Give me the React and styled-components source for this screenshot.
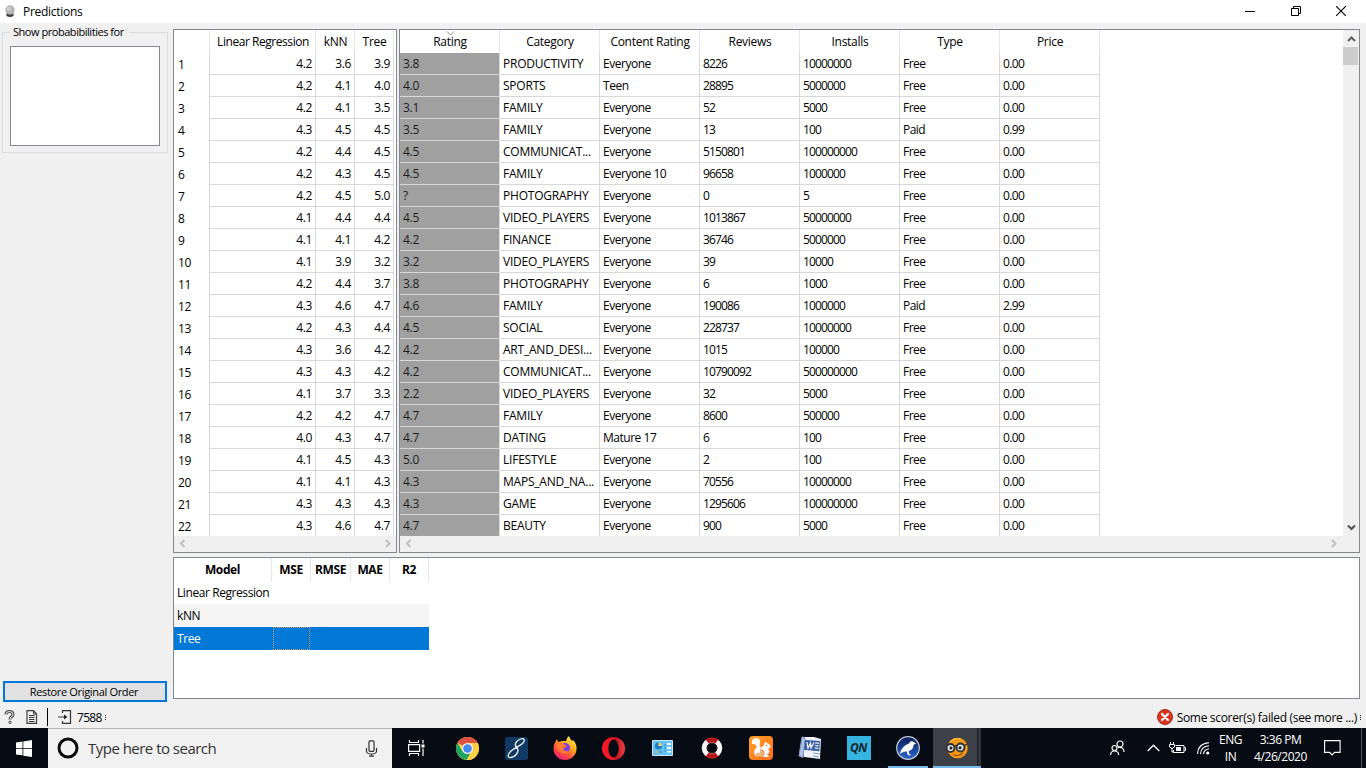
import React from "react";
import styled, { createGlobalStyle, css } from "styled-components";

const Global = createGlobalStyle`
  *, *::before, *::after { box-sizing: border-box; }
  body { margin: 0; background: #f0f0f0; overflow: hidden; }
`;

const FRAME = "#828790";
const GRID = "#d8d8d8";

const Screen = styled.div`
  width: 1366px;
  height: 768px;
  display: flex;
  flex-direction: column;
  background: #f0f0f0;
  color: #000;
  font: 12px/16px "Open Sans", "Noto Sans", sans-serif;
  letter-spacing: -0.32px;
  white-space: nowrap;
`;

const TitleBar = styled.header`
  height: 23px;
  flex: none;
  display: flex;
  align-items: center;
  background: #fff;
  padding: 0 2px 0 5px;
`;
const Title = styled.span`
  flex: 1;
  padding-left: 8px;
  letter-spacing: -0.28px;
`;
const WindowButton = styled.span`
  width: 45.5px;
  height: 21px;
  align-self: flex-start;
  display: flex;
  align-items: center;
  justify-content: center;
`;

const Body = styled.main`
  height: 681px;
  flex: none;
  display: flex;
  padding: 6px 6px 0 2px;
`;
const Side = styled.aside`
  width: 171px;
  flex: none;
  display: flex;
  flex-direction: column;
  justify-content: space-between;
`;
const Group = styled.fieldset`
  width: 166px;
  height: 128px;
  margin: -4px 0 0;
  padding: 7px 7px 0;
  border: 1px solid #dcdcdc;
  min-width: 0;
`;
const GroupLabel = styled.legend`
  padding: 0 5px 0 3px;
  height: 14px;
  font-size: 11px;
  line-height: 13px;
  letter-spacing: -0.46px;
`;
const ListBox = styled.div`
  width: 150px;
  height: 100px;
  border: 1px solid ${FRAME};
  background: #fff;
`;
const RestoreButton = styled.button`
  width: 164px;
  height: 21px;
  margin: 0 0 2px 1px;
  padding: 0 2px 0 0;
  border: 2px solid #0078d7;
  background: #e1e1e1;
  color: #000;
  font: inherit;
  font-size: 11px;
  letter-spacing: -0.33px;
  line-height: 18px;
`;

const Main = styled.section`
  display: flex;
  flex-direction: column;
  gap: 4px;
  width: 1187px;
`;
const Tables = styled.div`
  display: flex;
  gap: 2px;
  height: 524px;
  flex: none;
`;
const Frame = styled.div`
  width: ${(p) => p.$w}px;
  height: ${(p) => p.$h}px;
  flex: none;
  border: 1px solid ${FRAME};
  background: #fff;
  display: flex;
  overflow: hidden;
`;
const Pane = styled.div`
  flex: 1;
  min-width: 0;
  display: flex;
  flex-direction: column;
`;
const Viewport = styled.div`
  height: 506px;
  flex: none;
  overflow: hidden;
`;
const Grid = styled.div`
  display: grid;
  width: max-content;
  grid-template-columns: ${(p) => p.$cols};
  grid-template-rows: 23px;
  grid-auto-rows: 22px;
`;
const Head = styled.div`
  border-right: 1px solid #e5e5e5;
  text-align: center;
  line-height: 24px;
  padding-left: 1px;
  letter-spacing: ${(p) => p.$ls || -0.28}px;
  position: relative;
`;
const SortMark = styled.svg`
  position: absolute;
  top: 1px;
  left: 46px;
`;
const RowNumber = styled.div`
  border-right: 1px solid ${GRID};
  padding-left: 4px;
  line-height: 24px;
`;
const Cell = styled.div`
  border-right: 1px solid ${GRID};
  border-bottom: 1px solid ${GRID};
  line-height: 22px;
  padding: 0 3px;
  overflow: hidden;
  text-align: ${(p) => (p.$right ? "right" : "left")};
  letter-spacing: ${(p) => p.$ls ?? -0.35}px;
  ${(p) => p.$shaded && css`
    background: #a0a0a0;
    color: #1c1c1c;
  `}
`;
const HScroll = styled.div`
  flex: 1;
  background: #f0f0f0;
  display: flex;
  justify-content: space-between;
  align-items: center;
  padding: 0 ${(p) => p.$end}px 1px 5px;
`;
const VScroll = styled.div`
  width: 16px;
  height: 506px;
  flex: none;
  background: #f0f0f0;
  display: flex;
  flex-direction: column;
  align-items: center;
  padding: 5px 0 4px;
`;
const Thumb = styled.div`
  width: 15px;
  height: 18px;
  margin: 3px 1px auto 0;
  background: #cdcdcd;
`;
const RightPane = styled.div`
  display: flex;
  flex-direction: column;
  flex: 1;
`;
const RightTop = styled.div`
  display: flex;
  height: 506px;
`;

const ScoreTable = styled.div`
  width: 255px;
`;
const ScoreRow = styled.div`
  display: grid;
  grid-template-columns: 98px 39px 40px 39px 39px;
  height: 23px;
  line-height: 23px;
  background: ${(p) => p.$bg || "#fff"};
  color: ${(p) => p.$fg || "#000"};
`;
const ScoreHead = styled.div`
  border-right: 1px solid #e5e5e5;
  text-align: center;
  font-weight: 700;
  line-height: 24px;
  letter-spacing: ${(p) => p.$ls || -0.4}px;
`;
const ScoreCell = styled.div`
  padding-left: 3px;
  letter-spacing: -0.42px;
`;
const FocusCell = styled.div`
  margin: 0 0 0 1px;
  width: 37px;
  border: 1px dotted #d99a63;
`;

const StatusBar = styled.footer`
  height: 24px;
  flex: none;
  display: flex;
  align-items: center;
  padding: 2px 5px 0 4px;
`;
const Divider = styled.span`
  width: 1px;
  height: 18px;
  background: #000;
  margin: 0 10px 0 9px;
`;
const StatusText = styled.span`
  padding-left: ${(p) => p.$pad}px;
  padding-top: 1px;
  letter-spacing: ${(p) => p.$ls}px;
`;
const Grip = styled.span`
  width: 1px;
  height: 5px;
  margin-left: 3px;
  border-top: 1px solid #222;
  border-bottom: 1px solid #222;
  background: linear-gradient(transparent 1px, #222 1px, #222 2px, transparent 2px);
`;
const Spacer = styled.span`
  flex: 1;
`;

const Taskbar = styled.nav`
  height: 40px;
  flex: none;
  display: flex;
  background: #070c14;
  color: #fff;
`;
const StartButton = styled.div`
  width: 48px;
  display: flex;
  align-items: center;
  justify-content: center;
`;
const SearchBox = styled.div`
  width: 344px;
  border-top: 1px solid #b8b8b8;
  background: #f1f1f1;
  color: #333;
  display: flex;
  align-items: center;
  padding: 0 14px 1px 8px;
`;
const SearchText = styled.span`
  flex: 1;
  padding-left: 8px;
  font-size: 15px;
  line-height: 20px;
  letter-spacing: -0.52px;
`;
const TaskSlot = styled.div`
  width: ${(p) => p.$w || 49}px;
  padding-left: ${(p) => p.$pl || 0}px;
  display: flex;
  align-items: center;
  justify-content: center;
  flex: none;
`;
const RunningSlot = styled.div`
  width: ${(p) => p.$w}px;
  margin-left: ${(p) => p.$ml}px;
  display: flex;
  align-items: center;
  justify-content: center;
  border-bottom: 2px solid #76b9ed;
  padding-top: 2px;
  background: ${(p) => (p.$active ? "linear-gradient(90deg,#3d4046 44px,#1c2026 44px,#1c2026 45px,#30343a 45px)" : "transparent")};
`;
const QnTile = styled.div`
  width: 24px;
  height: 24px;
  background: #36b4e0;
  color: #12242e;
  font: italic 700 12px/24px "Open Sans", sans-serif;
  letter-spacing: -0.3px;
  text-align: center;
`;
const Tray = styled.div`
  margin-left: auto;
  display: flex;
  align-items: center;
`;
const TrayIcon = styled.span`
  width: ${(p) => p.$w}px;
  display: flex;
  justify-content: center;
  flex: none;

  svg { flex: none; }
`;
const TrayText = styled.div`
  width: ${(p) => p.$w}px;
  text-align: center;
  font-size: 12px;
  line-height: 17px;
  letter-spacing: ${(p) => p.$ls}px;
`;
const DesktopEdge = styled.span`
  width: 5px;
  height: 40px;
  border-left: 1px solid #4d5158;
`;

const PREDICTIONS = `4.2 3.6 3.9|4.2 4.1 4.0|4.2 4.1 3.5|4.3 4.5 4.5|4.2 4.4 4.5|4.2 4.3 4.5|4.2 4.5 5.0|4.1 4.4 4.4|4.1 4.1 4.2|4.1 3.9 3.2|4.2 4.4 3.7|4.3 4.6 4.7|4.2 4.3 4.4|4.3 3.6 4.2|4.3 4.3 4.2|4.1 3.7 3.3|4.2 4.2 4.7|4.0 4.3 4.7|4.1 4.5 4.3|4.1 4.1 4.3|4.3 4.3 4.3|4.3 4.6 4.7`
  .split("|")
  .map((r) => r.split(" "));

const APPS = [
  ["3.8", "PRODUCTIVITY", "Everyone", "8226", "10000000", "Free", "0.00"],
  ["4.0", "SPORTS", "Teen", "28895", "5000000", "Free", "0.00"],
  ["3.1", "FAMILY", "Everyone", "52", "5000", "Free", "0.00"],
  ["3.5", "FAMILY", "Everyone", "13", "100", "Paid", "0.99"],
  ["4.5", "COMMUNICAT...", "Everyone", "5150801", "100000000", "Free", "0.00"],
  ["4.5", "FAMILY", "Everyone 10", "96658", "1000000", "Free", "0.00"],
  ["?", "PHOTOGRAPHY", "Everyone", "0", "5", "Free", "0.00"],
  ["4.5", "VIDEO_PLAYERS", "Everyone", "1013867", "50000000", "Free", "0.00"],
  ["4.2", "FINANCE", "Everyone", "36746", "5000000", "Free", "0.00"],
  ["3.2", "VIDEO_PLAYERS", "Everyone", "39", "10000", "Free", "0.00"],
  ["3.8", "PHOTOGRAPHY", "Everyone", "6", "1000", "Free", "0.00"],
  ["4.6", "FAMILY", "Everyone", "190086", "1000000", "Paid", "2.99"],
  ["4.5", "SOCIAL", "Everyone", "228737", "10000000", "Free", "0.00"],
  ["4.2", "ART_AND_DESI...", "Everyone", "1015", "100000", "Free", "0.00"],
  ["4.2", "COMMUNICAT...", "Everyone", "10790092", "500000000", "Free", "0.00"],
  ["2.2", "VIDEO_PLAYERS", "Everyone", "32", "5000", "Free", "0.00"],
  ["4.7", "FAMILY", "Everyone", "8600", "500000", "Free", "0.00"],
  ["4.7", "DATING", "Mature 17", "6", "100", "Free", "0.00"],
  ["5.0", "LIFESTYLE", "Everyone", "2", "100", "Free", "0.00"],
  ["4.3", "MAPS_AND_NA...", "Everyone", "70556", "10000000", "Free", "0.00"],
  ["4.3", "GAME", "Everyone", "1295606", "100000000", "Free", "0.00"],
  ["4.7", "BEAUTY", "Everyone", "900", "5000", "Free", "0.00"],
];
const APP_COLUMNS = ["Rating", "Category", "Content Rating", "Reviews", "Installs", "Type", "Price"];
const CELL_SPACING = [-0.3, -0.22, -0.48, -0.85, -0.85, -0.55, -0.6];

const ARROWS = {
  left: "M5.5 1 2 4.5 5.5 8",
  right: "M2 1 5.5 4.5 2 8",
  up: "M1 6 4.5 2.5 8 6",
  down: "M1 2.5 4.5 6 8 2.5",
};
const Arrow = ({ dir, color = "#bfbfbf" }) => (
  <svg width={dir === "up" || dir === "down" ? 9 : 7} height="9" fill="none" stroke={color} strokeWidth="2">
    <path d={ARROWS[dir]} />
  </svg>
);

const CrystalBall = () => (
  <svg width="10" height="13" viewBox="0 0 10 13">
    <path d="M1.5 8h7v3q-3.500 2-7 0z" fill="#3c3c3c" />
    <circle cx="5" cy="5" r="4.700" fill="#b4b4b4" />
    <circle cx="3.800" cy="4" r="2.300" fill="#cfcfcf" />
  </svg>
);

function PredictionTable() {
  return (
    <Frame $w={224} $h={524}>
      <Pane>
        <Viewport>
          <Grid $cols="36px 106px 39px 39px">
            <Head />
            <Head $ls={-0.45}>Linear Regression</Head>
            <Head>kNN</Head>
            <Head>Tree</Head>
            {PREDICTIONS.map((row, i) => (
              <React.Fragment key={i}>
                <RowNumber>{i + 1}</RowNumber>
                {row.map((v, j) => (
                  <Cell key={j} $right>{v}</Cell>
                ))}
              </React.Fragment>
            ))}
          </Grid>
        </Viewport>
        <HScroll $end={5}>
          <Arrow dir="left" />
          <Arrow dir="right" />
        </HScroll>
      </Pane>
    </Frame>
  );
}

function DataTable() {
  return (
    <Frame $w={961} $h={524}>
      <RightPane>
        <RightTop>
          <Pane>
            <Viewport>
              <Grid $cols="repeat(7, 100px)">
                {APP_COLUMNS.map((c, i) => (
                  <Head key={c}>
                    {c}
                    {i === 0 && (
                      <SortMark width="9" height="5" fill="none" stroke="#8a8a8a">
                        <path d="M1 .5 4.500 4 8 .5" />
                      </SortMark>
                    )}
                  </Head>
                ))}
                {APPS.map((row, i) =>
                  row.map((v, j) => (
                    <Cell key={`${i}-${j}`} $shaded={j === 0} $ls={CELL_SPACING[j]}>{v}</Cell>
                  ))
                )}
              </Grid>
            </Viewport>
          </Pane>
          <VScroll>
            <Arrow dir="up" color="#606060" />
            <Thumb />
            <Arrow dir="down" color="#505050" />
          </VScroll>
        </RightTop>
        <HScroll $end={22}>
          <Arrow dir="left" />
          <Arrow dir="right" />
        </HScroll>
      </RightPane>
    </Frame>
  );
}

function Scores() {
  return (
    <Frame $w={1187} $h={142}>
      <ScoreTable>
        <ScoreRow>
          {["Model", "MSE", "RMSE", "MAE", "R2"].map((h) => (
            <ScoreHead key={h}>{h}</ScoreHead>
          ))}
        </ScoreRow>
        <ScoreRow><ScoreCell>Linear Regression</ScoreCell></ScoreRow>
        <ScoreRow $bg="#f5f5f5"><ScoreCell>kNN</ScoreCell></ScoreRow>
        <ScoreRow $bg="#0078d7" $fg="#fff">
          <ScoreCell>Tree</ScoreCell>
          <FocusCell />
        </ScoreRow>
      </ScoreTable>
    </Frame>
  );
}

const TaskView = () => (
  <svg width="17" height="16" fill="none" stroke="#fff" strokeWidth="1.200">
    <path d="M1.500 0v2.500h9V0M1.500 16v-2.500h9V16M.6 4.600h11v6.800H.6zM15 0v3.500M15 8.500V16" />
    <path d="M13.500 4.500h3v3h-3z" fill="#fff" stroke="none" />
  </svg>
);
const Chrome = () => (
  <svg width="23" height="23" viewBox="0 0 24 24">
    <circle cx="12" cy="12" r="12" fill="#ffce44" />
    <path d="M12 12 1.600 6A12 12 0 0 1 22.400 6L12 6.500z" fill="#dd5144" />
    <path d="M1.600 6A12 12 0 0 0 11 24l5.500-9.300L12 12 6.500 14.500z" fill="#1da362" />
    <path d="M12 6.300h10.500A12 12 0 0 1 11 24l6-10z" fill="#ffce44" />
    <circle cx="12" cy="12" r="5.800" fill="#f3f3f3" />
    <circle cx="12" cy="12" r="4.500" fill="#4587f3" />
  </svg>
);
const ScriptEight = () => (
  <svg width="23" height="23" viewBox="0 0 23 23" fill="none">
    <rect width="23" height="23" rx="2.500" fill="#123963" />
    <path d="M12 10.500C8.500 8 11 3.500 15.500 2c4-1.200 5 1.500 2 4.500-3 2.800-7.500 4-11.500 7.500-4 3.600-3.500 7 0 6.500 4-.5 9-5.500 6-10z" stroke="#f4f7fa" strokeWidth="1.300" />
  </svg>
);
const Firefox = () => (
  <svg width="24" height="24" viewBox="0 0 24 24">
    <defs>
      <linearGradient id="fox" x1=".85" y1="0" x2=".2" y2="1">
        <stop offset="0" stopColor="#fff44f" />
        <stop offset=".4" stopColor="#ffa41c" />
        <stop offset=".7" stopColor="#ff4a40" />
        <stop offset="1" stopColor="#e8187c" />
      </linearGradient>
    </defs>
    <path d="M13 5q1-4 3-5 1 3 3 5l1-1q4 4 3.500 9a11.500 11 0 0 1-23 0Q.5 8 3 5l.5-2 2 3L9 5z" fill="url(#fox)" />
    <circle cx="12" cy="12" r="5" fill="#7a3fe0" />
    <path d="M4 8q4-2 7 .5l3 1.500q-2 2-4 2 1 4 6 3-3 4-8 2-5-3-4-9z" fill="#ff7a2f" />
  </svg>
);
const Opera = () => (
  <svg width="23" height="23" viewBox="0 0 24 24">
    <defs>
      <linearGradient id="opera" x1="0" x2="1">
        <stop offset="0" stopColor="#ff1b2d" />
        <stop offset=".55" stopColor="#e01525" />
        <stop offset=".56" stopColor="#b50d1b" />
        <stop offset="1" stopColor="#ef4048" />
      </linearGradient>
    </defs>
    <circle cx="12" cy="12" r="12" fill="url(#opera)" />
    <ellipse cx="12" cy="12" rx="5.400" ry="9.300" fill="#070c14" />
  </svg>
);
const ControlPanel = () => (
  <svg width="21" height="16" viewBox="0 0 21 16">
    <rect width="21" height="16" rx="1" fill="#c9e9fb" />
    <rect x="1" y="1" width="19" height="14" fill="#65c3f3" />
    <circle cx="6.500" cy="6" r="3.600" fill="#217fc3" />
    <path d="M6.500 6V2.400A3.600 3.600 0 0 1 10 6z" fill="#f4d37a" />
    <path d="M12 5h2M12 8h2M12 11h2M3 12h7" stroke="#2485c5" strokeWidth="1.200" />
    <path d="M15 3h4v2h-4zM15 7h4v2h-4zM15 11h4v1.500h-4z" fill="#f4fbff" />
    <path d="M3 12h4" stroke="#f2c05b" strokeWidth="1.300" />
  </svg>
);
const Lifebuoy = () => (
  <svg width="22" height="22" viewBox="0 0 22 22" fill="none">
    <circle cx="11" cy="11" r="7.800" stroke="#f5f5f5" strokeWidth="5" />
    <path d="M6.200 4.600a8 8 0 0 1 9.600 0M6.200 17.400a8 8 0 0 0 9.600 0" stroke="#b71518" strokeWidth="5" />
    <circle cx="11" cy="11" r="5" stroke="#40191b" strokeWidth=".7" />
  </svg>
);
const Squirrel = () => (
  <svg width="24" height="24" viewBox="0 0 24 24">
    <defs>
      <linearGradient id="uc" x1="0" x2="1" y1="0" y2="1">
        <stop offset="0" stopColor="#ffa326" />
        <stop offset="1" stopColor="#ff6a1c" />
      </linearGradient>
    </defs>
    <rect width="24" height="24" rx="4" fill="url(#uc)" />
    <path d="M3 8q-1-5 4-6 4 0 4 4-1 3 1 6l3-3 1-3 4 2 2 3-3 2q3 3-1 6l3 2H10q-5-1-5-5 0-3 3-5-2-4-5-3z" fill="#fff" />
    <path d="M8 17a3.500 3.500 0 1 0 3-3m0 2a1.500 1.500 0 1 1-1 1" fill="none" stroke="#f97b1d" strokeWidth="1.200" />
    <circle cx="17.500" cy="9.500" r=".8" fill="#f97b1d" />
  </svg>
);
const WordIcon = () => (
  <svg width="24" height="24" viewBox="0 0 24 24">
    <path d="M4 1h12l7 2-1 20-16-2z" fill="#eef3fa" />
    <path d="M4 1 1 20l4 1.500 2-20zM15 14l7 1M15 17l7 1M15 20l6 1" fill="#acc3e5" stroke="#819bc8" />
    <path d="m7 4 15 1-.8 10L6 14z" fill="#345ca7" />
    <path d="m9 6 1 6 2.500-5 .5 5 3-5.500M17 7l4 .2M17 9.500l3.500.3M16.500 12l3.800.3" stroke="#fff" strokeWidth="1.200" fill="none" />
  </svg>
);
const Bird = () => (
  <svg width="24" height="24" viewBox="0 0 24 24">
    <defs>
      <linearGradient id="sky" x1="0" x2="0" y1="0" y2="1">
        <stop offset="0" stopColor="#0c1d58" />
        <stop offset="1" stopColor="#2866ce" />
      </linearGradient>
    </defs>
    <circle cx="12" cy="12" r="11.300" fill="url(#sky)" stroke="#c6ccd8" strokeWidth="1.200" />
    <path d="M4 17q2-7 9-9.500 1-3 4-2l3 2-2.500 1.500q0 5-5 6l1 3.500h1.500v.8h-3l-1.500-4q-3 0-6.500 2.500z" fill="#fff" />
  </svg>
);
const OrangeFace = () => (
  <svg width="24" height="22" viewBox="0 0 24 22" fill="none">
    <circle cx="12.500" cy="11" r="10.300" fill="#f79a13" />
    <path d="M5 5Q9 1 16 2" stroke="#ffb53a" strokeWidth="1.500" />
    <circle cx="5.500" cy="11" r="4" fill="#d9dde0" stroke="#2c3034" strokeWidth="1.800" />
    <circle cx="15.500" cy="10.500" r="4" fill="#d9dde0" stroke="#2c3034" strokeWidth="1.800" />
    <path d="M9 9.500q1.500-1 3 0M19 9l3-2" stroke="#2c3034" strokeWidth="1.500" />
    <circle cx="6" cy="11" r="1.500" fill="#222" />
    <circle cx="15" cy="10.700" r="1.500" fill="#222" />
    <path d="M8 17.500q6 2.500 10-1.500" stroke="#8a4a08" strokeWidth="1.100" />
  </svg>
);

export default function App() {
  return (
    <Screen>
      <Global />
      <TitleBar>
        <CrystalBall />
        <Title>Predictions</Title>
        <WindowButton><svg width="10" height="10"><path d="M0 5.500h10" stroke="#000" /></svg></WindowButton>
        <WindowButton>
          <svg width="10" height="10" fill="none" stroke="#000"><path d="M.5 2.500h7v7h-7zM2.500 2.500v-2h7v7h-2" /></svg>
        </WindowButton>
        <WindowButton><svg width="10" height="10"><path d="m0 0 10 10M10 0 0 10" stroke="#000" strokeWidth="1.100" /></svg></WindowButton>
      </TitleBar>

      <Body>
        <Side>
          <Group>
            <GroupLabel>Show probabibilities for</GroupLabel>
            <ListBox />
          </Group>
          <RestoreButton>Restore Original Order</RestoreButton>
        </Side>
        <Main>
          <Tables>
            <PredictionTable />
            <DataTable />
          </Tables>
          <Scores />
        </Main>
      </Body>

      <StatusBar>
        <svg width="11" height="14" viewBox="0 0 11 14" fill="none">
          <path d="M2 4.500Q2 1.500 5.500 1.500T9 4.500Q9 6 7 7 6 7.500 6 9.500" stroke="#4a4a4a" strokeWidth="3" />
          <path d="M2 4.500Q2 1.500 5.500 1.500T9 4.500Q9 6 7 7 6 7.500 6 9.500" stroke="#eee" strokeWidth="1" />
          <circle cx="6" cy="12.300" r="1.200" fill="#eee" stroke="#4a4a4a" />
        </svg>
        <svg width="12" height="14" viewBox="0 0 12 14" fill="none" stroke="#3e3e3e" style={{ marginLeft: 11 }}>
          <path d="M1 .6h6.500L10.500 4v9.400H1z" strokeWidth="1.200" />
          <path d="M7.500.6V4h3M3 5.500h5.500M3 7.500h5.500M3 9.500h5.500M3 11.500h5.500" />
        </svg>
        <Divider />
        <svg width="14" height="14" viewBox="0 0 14 14" fill="none" stroke="#333" strokeWidth="1.200">
          <path d="M4.500 3V.6h8v12.800h-8V11M0 7h8" />
          <path d="m6 4.500 3.500 2.500L6 9.500z" fill="#222" stroke="none" />
        </svg>
        <StatusText $pad={5} $ls={-0.7}>7588</StatusText>
        <Grip />
        <Spacer />
        <svg width="16" height="16" viewBox="0 0 16 16">
          <circle cx="8" cy="8" r="7.500" fill="#df3420" stroke="#a9281b" />
          <path d="m5 5 6 6m0-6-6 6" stroke="#fff" strokeWidth="2.200" strokeLinecap="round" />
        </svg>
        <StatusText $pad={4} $ls={-0.32}>Some scorer(s) failed (see more ...)</StatusText>
        <Grip />
      </StatusBar>

      <Taskbar>
        <StartButton>
          <svg width="16" height="17" viewBox="0 0 16 17" fill="#fff">
            <path d="M0 2.400 6.500 1.500V8H0zM7.300 1.400 16 0v8H7.300zM0 8.800h6.500v6.500L0 14.400zM7.300 8.800H16V17l-8.700-1.300z" />
          </svg>
        </StartButton>
        <SearchBox>
          <svg width="24" height="24"><circle cx="12" cy="12" r="9" fill="none" stroke="#0b0b0b" strokeWidth="3" /></svg>
          <SearchText>Type here to search</SearchText>
          <svg width="13" height="17" fill="none" stroke="#333" strokeWidth="1.200">
            <rect x="4" y=".8" width="5" height="10.500" rx="1" />
            <path d="M1.500 8v3.500Q2 14 6.500 14t5-2.500V8M6.500 14v2M4 16.200h5" />
          </svg>
        </SearchBox>
        <TaskSlot $w={48}><TaskView /></TaskSlot>
        <TaskSlot $w={51} $pl={3}><Chrome /></TaskSlot>
        <TaskSlot $pl={1}><ScriptEight /></TaskSlot>
        <TaskSlot><Firefox /></TaskSlot>
        <TaskSlot><Opera /></TaskSlot>
        <TaskSlot><ControlPanel /></TaskSlot>
        <TaskSlot><Lifebuoy /></TaskSlot>
        <TaskSlot><Squirrel /></TaskSlot>
        <TaskSlot><WordIcon /></TaskSlot>
        <TaskSlot><QnTile>QN</QnTile></TaskSlot>
        <RunningSlot $w={40} $ml={5}><Bird /></RunningSlot>
        <RunningSlot $w={48} $ml={5} $active><OrangeFace /></RunningSlot>
        <Tray>
          <TrayIcon $w={49}>
            <svg width="15" height="16" fill="none" stroke="#fff" strokeWidth="1.200">
              <circle cx="10" cy="4" r="3" />
              <circle cx="4.500" cy="8" r="2.500" />
              <path d="M.6 15q0-4 4-4t4 4M8 7.500q6-1 6 4.500" />
            </svg>
          </TrayIcon>
          <TrayIcon $w={23}>
            <svg width="13" height="8" fill="none" stroke="#fff" strokeWidth="1.300"><path d="m.7 7 5.800-5.800L12.300 7" /></svg>
          </TrayIcon>
          <TrayIcon $w={25}>
            <svg width="17" height="12" viewBox="0 0 17 12" fill="none" stroke="#fff">
              <path d="M6.500 3.500h8.500v7H4.500V8M15.500 5.500h1v3h-1M1.500 0v2M4.500 0v2M.5 2.500h5V5L3 6.500.5 5zM3 6v4h2" />
              <path d="M7 5h5v4H7z" fill="#fff" stroke="none" />
            </svg>
          </TrayIcon>
          <TrayIcon $w={27}>
            <svg width="13" height="13" fill="none" stroke="#fff" strokeWidth="1.100">
              <path d="M.6 12Q1 1.500 12 .8M3.500 12Q4 4.500 12 3.800M6.500 12Q7 7.500 12 6.800" />
              <circle cx="10.700" cy="11" r="1.600" fill="#fff" stroke="none" />
            </svg>
          </TrayIcon>
          <TrayText $w={27} $ls={-0.5}>ENG<br />IN</TrayText>
          <TrayText $w={73} $ls={-0.45}>3:36 PM<br />4/26/2020</TrayText>
          <TrayIcon $w={31}>
            <svg width="17" height="16" fill="none" stroke="#fff" strokeWidth="1.100"><path d="M.6.6h15.500v11.800h-5.500l-2.500 2.500-2.500-2.500h-5z" /></svg>
          </TrayIcon>
          <TrayIcon $w={13} />
          <DesktopEdge />
        </Tray>
      </Taskbar>
    </Screen>
  );
}
